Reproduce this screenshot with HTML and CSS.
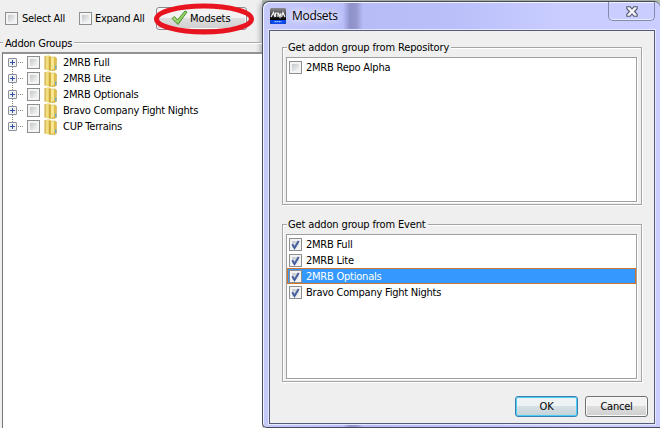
FILE: index.html
```html
<!DOCTYPE html>
<html lang="en">
<head>
<meta charset="utf-8">
<title>Modsets</title>
<link rel="stylesheet" href="styles.css">
</head>
<body>
<svg class="defs" aria-hidden="true">
  <defs>
    <linearGradient id="gold" x1="0" x2="1" y1="0" y2="0"><stop offset="0" stop-color="#c9a233"/><stop offset=".35" stop-color="#f6e48e"/><stop offset="1" stop-color="#dcba47"/></linearGradient>
    <linearGradient id="leaf" x1="0" x2="1" y1="0" y2="1"><stop offset="0" stop-color="#c3ec98"/><stop offset="1" stop-color="#6fbe3d"/></linearGradient>
    <symbol id="folder" viewBox="0 0 14 16">
      <path d="M6 2h5l1.500 1v11.500l-2 1H6z" fill="#dfbd4b" stroke="#cfb050" stroke-width=".6"/>
      <path d="M11 10.500h1.400v3.500h-1.400z" fill="#6fa9d8"/>
      <path d="M7 2.500l3-1v12.500l-3 1z" fill="#f6e593"/>
      <path d="M.5 1 5 .3l2 1.700V14.500l-1.500 1.200-5-1.200z" fill="url(#gold)"/>
      <path d="M5.700 2v13" stroke="#bd962c" stroke-width=".8"/>
    </symbol>
    <symbol id="tick" viewBox="0 0 13 13">
      <path d="M3.300 6.300 5.500 10 9.700 2.900" fill="none" stroke="#455f9f" stroke-width="2"/>
    </symbol>
  </defs>
</svg>
<div class="screen">
  <main class="app">
    <div class="toolbar">
      <span class="check"></span><span class="t select">Select All</span>
      <span class="check"></span><span class="t expand">Expand All</span>
      <button class="modsets"><svg width="17" height="16" viewBox="0 0 17 16"><path d="M1 8.500 3.500 6.500 6.500 10 14 1 16 2 7 14.500z" fill="url(#leaf)" stroke="#4b8f2d"/></svg><span class="t mod">Modsets</span></button>
    </div>
    <svg class="ring" width="104" height="38" viewBox="0 0 104 38"><ellipse cx="52" cy="19" rx="47.500" ry="13" fill="none" stroke="#e8141f" stroke-width="5"/></svg>
    <div class="heading"><span class="t addon">Addon Groups</span></div>
    <div class="tree">
      <div class="node"><i class="plus"></i><i class="dots"></i><span class="check"></span><svg class="folder"><use href="#folder"/></svg><span class="t">2MRB Full</span></div>
      <div class="node"><i class="plus"></i><i class="dots"></i><span class="check"></span><svg class="folder"><use href="#folder"/></svg><span class="t">2MRB Lite</span></div>
      <div class="node"><i class="plus"></i><i class="dots"></i><span class="check"></span><svg class="folder"><use href="#folder"/></svg><span class="t">2MRB Optionals</span></div>
      <div class="node"><i class="plus"></i><i class="dots"></i><span class="check"></span><svg class="folder"><use href="#folder"/></svg><span class="t">Bravo Company Fight Nights</span></div>
      <div class="node"><i class="plus"></i><i class="dots"></i><span class="check"></span><svg class="folder"><use href="#folder"/></svg><span class="t">CUP Terrains</span></div>
    </div>
  </main>
  <div class="dialog">
    <div class="titlebar">
      <svg class="logo" width="16" height="16" viewBox="0 0 16 16"><defs><linearGradient id="lg" x1="0" x2="0" y1="0" y2="1"><stop offset="0" stop-color="#8b8b90"/><stop offset=".5" stop-color="#333"/><stop offset=".7" stop-color="#000"/></linearGradient></defs><rect width="16" height="16" rx="1.500" fill="url(#lg)"/><path d="M0 12h16v2.500L14.500 16h-13L0 14.500z" fill="#0b49e8"/><path d="M1 9 3.500 4.500 5 9M5.500 9V5H8v4M8.500 5l1.500 4 1-4M11.500 9 13 4.500 15 9" fill="none" stroke="#eee" stroke-width="1.200"/><path d="M4.500 13.700h7" stroke="#9fc4ff" stroke-width="1.200" stroke-dasharray="1.500 .5"/></svg>
      <span class="title">Modsets</span>
      <span class="close"><svg width="12" height="11" viewBox="0 0 12 11"><path d="M.8.800h3.400L6 3 7.800.8h3.400v1.900L8.500 5.500l2.700 2.800v1.900H7.800L6 8 4.200 10.200H.8V8.300l2.700-2.800L.8 2.700z" fill="#f4f4f8" stroke="#555a70" stroke-width="1.100"/></svg></span>
    </div>
    <div class="client">
      <section class="group">
        <h2 class="t repo">Get addon group from Repository</h2>
        <div class="list">
          <div class="item"><span class="check"></span><span class="t">2MRB Repo Alpha</span></div>
        </div>
      </section>
      <section class="group second">
        <h2 class="t event">Get addon group from Event</h2>
        <div class="list">
          <div class="item"><span class="check"><svg><use href="#tick"/></svg></span><span class="t">2MRB Full</span></div>
          <div class="item"><span class="check"><svg><use href="#tick"/></svg></span><span class="t">2MRB Lite</span></div>
          <div class="item selected"><span class="check"><svg><use href="#tick"/></svg></span><span class="t">2MRB Optionals</span></div>
          <div class="item"><span class="check"><svg><use href="#tick"/></svg></span><span class="t">Bravo Company Fight Nights</span></div>
        </div>
      </section>
      <div class="actions"><button class="ok">OK</button><button>Cancel</button></div>
    </div>
  </div>
</div>
</body>
</html>
```

FILE: styles.css
```css
* { box-sizing: border-box; }
body { margin: 0; background: #efefef; color: #000; font: 11px/16px "DejaVu Sans Condensed", "DejaVu Sans", sans-serif; font-stretch: condensed; letter-spacing: -0.23px; overflow: hidden; }
.defs { position: absolute; width: 0; height: 0; }
.screen { display: flex; width: 660px; height: 428px; background: linear-gradient(90deg, #efefef 262px, #b9c2b9 262px) 0 0 / 100% 6px no-repeat, #efefef; }
.app { position: relative; width: 262px; height: 428px; display: flex; flex-direction: column; }
.t { white-space: nowrap; }
.toolbar { display: flex; align-items: center; height: 36px; padding-left: 5px; }
.toolbar .select, .toolbar .expand { padding-top: 1px; letter-spacing: -0.3px; }
.check { flex: none; display: block; width: 13px; height: 13px; border: 1px solid #8e8f8f; background: linear-gradient(135deg, #c3c8cc, #f6f6f6) 2px 2px / 7px 7px no-repeat, #f4f4f4; }
.check svg { display: block; width: 13px; height: 13px; margin: -1px; }
.select { width: 57px; margin-left: 4px; }
.expand { width: 61px; margin-left: 3px; }
button { display: flex; align-items: center; justify-content: center; width: 63px; height: 21px; padding: 0; border: 1px solid #707070; border-radius: 3px; background: linear-gradient(#f3f3f3 0 45%, #dedede 50%, #cfcfcf); box-shadow: inset 0 0 0 1px #fafafa; color: #000; font: inherit; font-stretch: condensed; letter-spacing: inherit; }
.modsets { width: 91px; height: 23px; justify-content: flex-start; padding-left: 14px; border-color: #8a8a8a; }
.mod { margin-left: 2px; padding-top: 1px; letter-spacing: -0.1px; }
.ring { position: absolute; left: 152px; top: 0; }
.heading { display: flex; align-items: center; height: 16px; padding-left: 5px; }
.heading::before { content: ""; width: 3px; height: 2px; margin: -2px 0 0 -5px; background: linear-gradient(#a9a9a9 50%, #fff 50%); }
.heading .addon { padding: 0 2px; }
.heading::after { content: ""; flex: 1; height: 2px; margin-top: -2px; background: linear-gradient(#a9a9a9 50%, #fff 50%); }
.tree { flex: 1; margin-left: 2px; padding: 1px 0 0 5px; border: solid #777; border-width: 2px 0 0 1px; border-top-color: #929292; background: #fff; }
.node { display: flex; align-items: center; height: 16px; }
.node .check { margin-top: -2px; }
.plus { width: 9px; height: 9px; margin-top: -2px; border: 1px solid #8a8f99; border-radius: 1px; background: linear-gradient(#2c4f9e, #2c4f9e) 1px 3px / 5px 1px no-repeat, linear-gradient(#2c4f9e, #2c4f9e) 3px 1px / 1px 5px no-repeat, #f2f2f2; }
.node:not(:last-child) .plus::after { content: ""; display: block; width: 1px; height: 7px; margin: 8px 0 0 3px; background: repeating-linear-gradient(#888 0 1px, transparent 1px 2px); }
.dots { width: 5px; height: 1px; margin: -2px 4px 0 1px; background: repeating-linear-gradient(90deg, #888 0 1px, transparent 1px 2px); }
.folder { width: 14px; height: 16px; margin: -1px 5px 0 4px; }
.dialog { width: 398px; height: 427px; margin-top: 1px; padding: 0 5px 4px 6px; border: 1px solid #454b5b; border-right: 0; border-radius: 7px 6px 0 5px; background: linear-gradient(90deg, #c5c9fa 0, #babffa 80px, #8f91c9 87px, #9496cd 93px, #b7bcf7 100px, #babffa 190px, #c9cdff 300px); box-shadow: inset 1px 1px #f2f3ff, -2px 0 5px #0004; }
.titlebar { display: flex; align-items: flex-start; height: 28px; }
.logo { margin: 6px 0 0 1px; }
.title { margin: 5px 0 0 6px; font: 12px/18px "Open Sans", "Noto Sans", sans-serif; letter-spacing: -0.3px; text-shadow: 0 0 7px #fff, 0 0 9px #fff; }
.close { display: flex; align-items: center; justify-content: center; width: 47px; height: 19px; margin-left: auto; border: 1px solid #858baa; border-top: 0; border-radius: 0 0 5px 5px; box-shadow: inset 0 -1px #e9eaff; }
.client { width: 386px; height: 394px; padding: 16px 12px 0; border: 1px solid #555b78; background: #efefef; box-shadow: 0 0 0 1px #e5e7ff; }
.group { height: 158px; padding: 0 4px 3px 3px; border: 1px solid #a5a5a5; box-shadow: 1px 1px #fff, inset 1px 1px #fff; }
h2 { width: max-content; height: 16px; margin: -8px 0 1px 1px; padding: 0 2px 0 1px; background: #efefef; font: inherit; font-stretch: condensed; letter-spacing: -0.14px; }
.second { margin-top: 19px; }
.list { height: 145px; padding: 1px 0 0; border: 1px solid #a0a0a0; background: #fff; box-shadow: 1px 1px #fff; }
.item { display: flex; align-items: center; gap: 4px; height: 16px; padding-left: 2px; }
.item .check { margin-top: 1px; }
.item .t { padding-top: 2px; }
.selected {
  --h: repeating-linear-gradient(90deg, #e0701a 0 1px, #c07a3c 1px 2px);
  --v: repeating-linear-gradient(#e0701a 0 1px, #c07a3c 1px 2px);
  background: var(--h) 0 0 / 100% 1px no-repeat, var(--h) 0 100% / 100% 1px no-repeat, var(--v) 0 0 / 1px 100% no-repeat, var(--v) 100% 0 / 1px 100% no-repeat, #3399ff;
  color: #fff;
}
.actions { display: flex; justify-content: flex-end; gap: 7px; margin: 14px -6px 0 0; }
.ok { border-color: #3c7fb1; background: linear-gradient(#edf2f4 0 45%, #d5e1e6 50%, #c4d2d8); box-shadow: inset 0 0 0 1px #4ccdf3; }
```
